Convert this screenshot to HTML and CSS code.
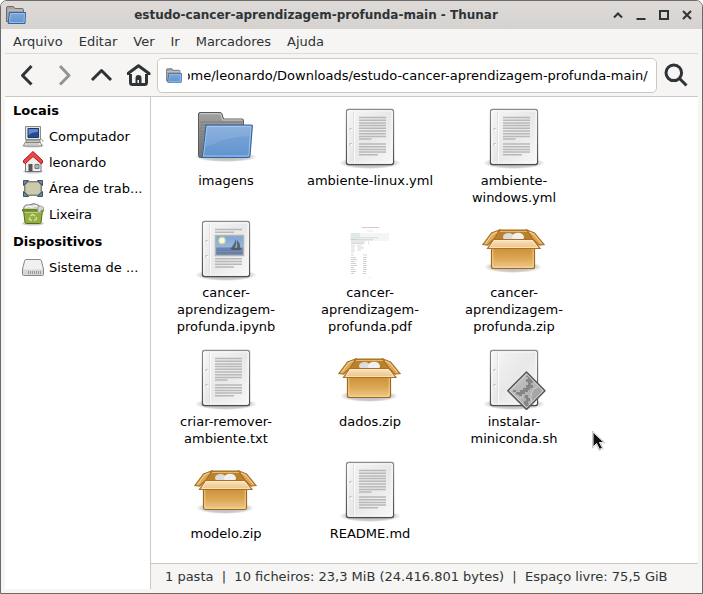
FILE: index.html
```html
<!DOCTYPE html>
<html lang="pt">
<head>
<meta charset="utf-8">
<title>estudo-cancer-aprendizagem-profunda-main - Thunar</title>
<link rel="stylesheet" href="styles.css">
<script src="main.js" defer></script>
</head>
<body>
<svg class="defs" width="0" height="0" aria-hidden="true">
  <defs>
    <linearGradient id="paper" x1="0" y1="0" x2="1" y2="1"><stop offset="0" stop-color="#f6f6f6"/><stop offset=".5" stop-color="#e8e8e8"/><stop offset="1" stop-color="#f8f8f8"/></linearGradient>
    <linearGradient id="edge" x1="0" y1="0" x2="0" y2="1"><stop offset="0" stop-color="#8c8c8c"/><stop offset="1" stop-color="#4c4c4c"/></linearGradient>
    <linearGradient id="blue" x1="0" y1="0" x2="0" y2="1"><stop offset="0" stop-color="#7fa8d8"/><stop offset="1" stop-color="#5f94d0"/></linearGradient>
    <linearGradient id="gray" x1="0" y1="0" x2="0" y2="1"><stop offset="0" stop-color="#a2a2a2"/><stop offset="1" stop-color="#727272"/></linearGradient>
    <linearGradient id="card" x1="0" y1="0" x2="0" y2="1"><stop offset="0" stop-color="#cd9138"/><stop offset=".5" stop-color="#dca653"/><stop offset="1" stop-color="#efc98c"/></linearGradient>
    <linearGradient id="flap" x1="0" y1="0" x2="0" y2="1"><stop offset="0" stop-color="#fbe4c0"/><stop offset="1" stop-color="#ecc07c"/></linearGradient>
    <linearGradient id="metal" x1="0" y1="0" x2="1" y2="1"><stop offset="0" stop-color="#c8c8c8"/><stop offset="1" stop-color="#a4a4a4"/></linearGradient>
    <linearGradient id="sky" x1="0" y1="0" x2="0" y2="1"><stop offset="0" stop-color="#7ba5d6"/><stop offset="1" stop-color="#aac6e0"/></linearGradient>
    <radialGradient id="shade"><stop offset="0" stop-color="#000" stop-opacity=".3"/><stop offset=".75" stop-color="#000" stop-opacity=".2"/><stop offset="1" stop-color="#000" stop-opacity="0"/></radialGradient>

    <symbol id="folder" viewBox="0 0 64 64">
      <ellipse cx="32" cy="52" rx="31" ry="5" fill="url(#shade)"/>
      <path d="M6.500 52.500Q4.500 52.500 4.500 50.500V9Q4.500 7.500 6 7.500H26Q27.500 7.500 28 9L29.500 14H48Q49.500 14 49.500 15.500V52.500Z" fill="url(#gray)" stroke="#5a5a5a"/>
      <path d="M6 8.700H26.500L28.500 15H48" fill="none" stroke="#cecece"/>
      <path d="M6 17H48M6 20H48M6 23H12M6 26H11M6 29H11M6 32H10M6 35H10M6 38H10M6 41H9M6 44H9" stroke="#777" stroke-width=".8"/>
      <path d="M12 20H57.500Q58.500 20 58.300 21L56 50.500Q55.800 52.500 54 52.500H7Q8.500 52 9 49Z" fill="url(#blue)" stroke="#3566a5" stroke-width="1.200"/>
      <path d="M13 21.500H56.800L54.800 51H9.500Z" fill="none" stroke="#bcd3ee" opacity=".7"/>
      <path d="M13.500 22H56L55.300 31Q36 32 24 37 16 41 11.500 41Z" fill="#fff" opacity=".1"/>
    </symbol>

    <symbol id="folder-small" viewBox="0 0 20 18">
      <path d="M.5 15.500V2Q.5 .5 2 .5H7.500L9 2.500H16Q17.500 2.500 17.500 4V15.500Z" fill="#a3a3a3" stroke="#6d6d6d"/>
      <path d="M1.500 4H17" stroke="#c6c6c6"/>
      <path d="M3.500 6.500H19.500L19 17.500H2.200Z" fill="url(#blue)" stroke="#2f62a4" stroke-linejoin="round"/>
      <path d="M4.500 7.500H18.400L18 16.500H3.500Z" fill="none" stroke="#a9c6e8" opacity=".8"/>
    </symbol>

    <symbol id="page" viewBox="0 0 64 64">
      <ellipse cx="32" cy="58" rx="31" ry="6" fill="url(#shade)"/>
      <rect x="8.500" y="4.500" width="47" height="55" rx="2" fill="url(#paper)" stroke="url(#edge)" stroke-width="1.300"/>
      <rect x="9.800" y="5.800" width="44.400" height="52.400" rx="1" fill="none" stroke="#fff"/>
      <path d="M15.500 6V58" stroke="#dadada" stroke-width=".8"/><path d="M16.500 6V58" stroke="#fff" stroke-width=".8"/>
      <circle cx="12.800" cy="24.300" r="1.300" fill="#b5b5b5"/><circle cx="13.400" cy="24.900" r="1.100" fill="#fff"/>
      <circle cx="12.800" cy="39.300" r="1.300" fill="#b5b5b5"/><circle cx="13.400" cy="39.900" r="1.100" fill="#fff"/>
    </symbol>

    <symbol id="text" viewBox="0 0 64 64">
      <use href="#page"/>
      <path d="M21 12.500H48M21 15.200H48M21 17.900H48M21 20.600H48M21 23.300H48M21 26H48M21 28.700H48M21 31.400H48M21 34.100H33.500M21 39H48M21 41.700H48M21 44.400H48M21 47.100H48M21 49.800H40" stroke="#b8b8b8" stroke-width="1.500"/>
    </symbol>

    <symbol id="rich" viewBox="0 0 64 64">
      <use href="#page"/>
      <path d="M21 12.500H48M21 15.300H40M21 41.800H48M21 44.500H48M21 47.200H48M21 49.900H40" stroke="#b8b8b8" stroke-width="1.500"/>
      <rect x="21.500" y="18.500" width="28" height="20" fill="url(#sky)" stroke="#b4b4b4" stroke-width="1.500"/>
      <path d="M22.200 30.500H48.800V37.800H22.200Z" fill="#6780a6"/>
      <path d="M22.500 32H49M22.500 34.500H49" stroke="#7d94b5" stroke-width=".7"/>
      <circle cx="28" cy="23.500" r="3.800" fill="#f0f0a0" opacity=".7"/><circle cx="28" cy="23.500" r="2.500" fill="#fffad0"/>
      <path d="M42 22Q43 27 41 31H37Q40 28 42 22ZM43 23Q47 27 46 31H43Z" fill="#5b6675"/><path d="M36 31H48L46 33H38Z" fill="#505b6c"/>
    </symbol>

    <symbol id="preview" viewBox="0 0 64 64">
      <path d="M24 10.500H41" stroke="#d0b8be" stroke-width=".8"/><path d="M29 14H35" stroke="#ddd" stroke-width=".7"/>
      <path d="M12 16H51V24H12Z" fill="#f5f5f5"/>
      <path d="M13 17H22M13 19H22M13 20.800H40M13 22.400H18" stroke="#b9dac2" stroke-width=".7"/>
      <path d="M13 22.800H35M13 25H27M13 26.700H26M30 25H31M30 26.700H31" stroke="#bbb" stroke-width=".7"/>
      <path d="M13 29H17M13 31H16M13 33H17M13 35H16M19 29H24M20 31H26M19 33H23M13 38H16M25 38H29" stroke="#c4c4c4" stroke-width=".7"/>
      <path d="M13 40.500H18M13 42.500H19M13 44.500H17M13 46.500H18M13 48.500H19M13 50.500H16M13 52.500H17M13 54.500H18M13 56.500H16" stroke="#c4c4c4" stroke-width=".8"/>
      <path d="M25 40.500H29M25 42.500H28M25 44.500H29M25 46.500H28M25 48.500H29M25 50.500H28M25 52.500H29M25 54.500H28M25 56.500H28" stroke="#c4c4c4" stroke-width=".8"/>
      <path d="M31 60.500H32" stroke="#ccc" stroke-width=".7"/>
    </symbol>

    <symbol id="box" viewBox="0 0 64 64">
      <ellipse cx="31" cy="50" rx="29" ry="6" fill="url(#shade)"/>
      <path d="M17 13H45.500L52 23V31H11V23Z" fill="#b9812d" stroke="#a06a1c"/>
      <path d="M18 14.500H45" stroke="#e7b767"/>
      <ellipse cx="26.500" cy="20" rx="5.500" ry="4" fill="#dcdcdc"/><ellipse cx="36" cy="20" rx="6" ry="4.300" fill="#f0f0f0"/>
      <path d="M17.500 13L9.500 16 1 27.500 5.500 28 12 22Z" fill="#e1a854" stroke="#a8712a" stroke-width="1.200"/>
      <path d="M45 13L52.500 16 62 27.500 57 28 51 22Z" fill="#e1a854" stroke="#a8712a" stroke-width="1.200"/>
      <path d="M15.500 15L10.500 17 3.500 26.500M47 15L51.800 17 59.500 26.500" fill="none" stroke="#f8d59d"/>
      <path d="M9.500 31V49.500Q9.500 51.500 11.500 51.500H50.500Q52.500 51.500 52.500 49.500V31Z" fill="url(#card)" stroke="#a06a1c" stroke-width="1.200"/>
      <path d="M10.800 32V50.200H51.200V32" fill="none" stroke="#f7d89f" opacity=".8"/>
      <path d="M11.500 22.500H51L58 31.500H5.500Z" fill="url(#flap)" stroke="#a8712a" stroke-width="1.200"/>
      <path d="M12 23.600H50.500L55.500 30.400H8Z" fill="none" stroke="#fdebcf" stroke-width=".8"/>
    </symbol>

    <symbol id="script" viewBox="0 0 64 64">
      <use href="#page"/>
      <path d="M44.500 26L63 44.800 44.500 63.500 25.800 44.800Z" fill="url(#metal)" stroke="#555" stroke-width="1.400" stroke-linejoin="round"/>
      <path d="M44.500 28L61 44.800 44.500 61.500 27.800 44.800Z" fill="none" stroke="#ddd" stroke-width=".8"/>
      <path d="M45 29L51 35V37H49V39H51V42H48V44H46V46H43V48H40V50H37L34 48V46H31V44H34V46H38V44H41V42H44V39H46V36H44V33H46V31H44Z" fill="#858585"/>
      <path d="M31 46L34 49H37V51H40V49H43V52H41L38 54Z" fill="#bcbcbc"/>
      <path d="M43 49H46V52H48V55H46V58H47V59L44.500 61 42 58V55H44V52H42Z" fill="#858585"/>
      <path d="M56.500 40.500L61 44.800 50 56Q48 52 49.500 47T56.500 40.500Z" fill="#a6a6a6" stroke="#d0d0d0"/>
    </symbol>
  </defs>
</svg>

<div class="window">
  <header class="titlebar">
    <svg class="app-icon"><use href="#folder-small"/></svg>
    <h1 class="title">estudo-cancer-aprendizagem-profunda-main - Thunar</h1>
    <div class="controls">
      <button aria-label="Enrolar"><svg viewBox="0 0 12 12"><path d="M2 8.500L6 4.500 10 8.500"/></svg></button>
      <button aria-label="Minimizar"><svg viewBox="0 0 12 12"><path d="M1.500 10H10.500"/></svg></button>
      <button aria-label="Maximizar"><svg viewBox="0 0 12 12"><path d="M2 2H10V10H2Z"/></svg></button>
      <button aria-label="Fechar"><svg viewBox="0 0 12 12"><path d="M2 2L10 10M10 2L2 10"/></svg></button>
    </div>
  </header>

  <nav class="menubar">
    <button>Arquivo</button><button>Editar</button><button>Ver</button><button>Ir</button><button>Marcadores</button><button>Ajuda</button>
  </nav>

  <div class="toolbar">
    <button class="tool" aria-label="Voltar"><svg viewBox="0 0 24 24"><path d="M15.500 3L6.500 12.500 15.500 21.500"/></svg></button>
    <button class="tool" aria-label="Avançar" disabled><svg viewBox="0 0 24 24"><path d="M7 3L16 12.500 7 21.500"/></svg></button>
    <button class="tool" aria-label="Subir"><svg viewBox="0 0 24 24"><path d="M2 17L11.500 7.500 21 17"/></svg></button>
    <button class="tool" aria-label="Início"><svg viewBox="0 0 24 24"><path d="M1 12V10.500L11.500 2.800 22 10.500V12M3.500 11V19.500Q3.500 21.500 5.500 21.500H17.500Q19.500 21.500 19.500 19.500V11"/><path class="solid" d="M8.500 21V15Q8.500 12 11.500 12T14.500 15V21H12V17H10.500V21Z"/></svg></button>
    <div class="location">
      <svg><use href="#folder-small"/></svg>
      <input id="path" type="text" aria-label="Localização" spellcheck="false" value="/home/leonardo/Downloads/estudo-cancer-aprendizagem-profunda-main/">
    </div>
    <button class="tool search" aria-label="Procurar"><svg viewBox="0 0 24 24"><circle cx="9.800" cy="9.800" r="7.800"/><path d="M15.500 15.500L22.500 22.500"/></svg></button>
  </div>

  <div class="content">
    <aside class="sidebar">
      <h2>Locais</h2>
      <ul>
        <li><a href="#computador">
          <svg viewBox="0 0 24 24"><ellipse cx="12" cy="21.500" rx="11" ry="2" fill="#ccc"/><path d="M4.500 2.500H19.500V15.500H4.500Z" fill="#e4e4de" stroke="#8b8b84"/><path d="M7 4.500H17.500V13.500H7Z" fill="#234a93" stroke="#16376f"/><path d="M7.500 5H17V8Q11 8 7.500 11Z" fill="#6589c6"/><path d="M5 16H19V18.500H5Z" fill="#c2c2ba" stroke="#8b8b84"/><path d="M4 18.500H19.500L21 22H2.500Z" fill="#eee" stroke="#888"/><path d="M5 20H18" stroke="#aaa"/><path d="M20 15Q22.500 15.500 22 18" fill="none" stroke="#aaa"/></svg>
          Computador</a></li>
        <li><a href="#leonardo">
          <svg viewBox="0 0 24 24"><ellipse cx="12" cy="21.500" rx="10" ry="2" fill="#ccc"/><path d="M4.500 11L12 4 20 11V21.500H4.500Z" fill="#eee" stroke="#777"/><path d="M7.500 14H11.500V21.500H7.500Z" fill="#555"/><path d="M14 14.500H18V18.500H14Z" fill="#aab4c2" stroke="#777"/><path d="M12 1.500L21.500 10.500V13L20 13.500 12 6.500 4.500 13.500 2.500 12.500V10.500Z" fill="#ef4747" stroke="#b51616"/></svg>
          leonardo</a></li>
        <li><a href="#area">
          <svg viewBox="0 0 24 24"><path d="M3.500 5.500H20.500V19.500H3.500Z" fill="#c2c3a2" stroke="#777968"/><path d="M7 6H17L20 9V16L17 19H7L4 16V9Z" fill="#c9caae" stroke="#8b8d75"/><path d="M2.500 4.500H7.500L2.500 9.500ZM16.500 4.500H21.500V9.500ZM2.500 15.500L7.500 20.500H2.500ZM21.500 15.500V20.500H16.500Z" fill="#7087a8" stroke="#3e506b"/></svg>
          Área de trab...</a></li>
        <li><a href="#lixeira">
          <svg viewBox="0 0 24 24"><ellipse cx="12" cy="21.500" rx="11" ry="2" fill="#ccc"/><path d="M2.500 7.500Q2.500 3 6 3T11 2 16 2.500 21.500 7.500Z" fill="#c9ccc9" stroke="#7d807d"/><path d="M4.500 5.500L8 4 11 5.500 14 3.500 17 5" fill="none" stroke="#f4f4f4" stroke-width="1.500"/><path d="M2.500 8.500H21.500L20 20.500Q20 21.500 18.500 21.500H5.500Q4 21.500 4 20.500Z" fill="#93ad3f" stroke="#566d16"/><path d="M1 7H23V9.500H1Z" fill="#6d8a22"/><path d="M3.500 10.500H20.500" stroke="#bccf7d"/><path d="M17 4.500Q21 3 22.500 5.500T19.500 9L18.500 11.500 16.500 9Z" fill="#d5d5d5" stroke="#8b8b8b" stroke-width=".7"/><path d="M9.500 14L11.500 12.500 14 14M15.500 15L15 17.500 13 18.500M11 18.500L8.500 17.500 9 15.500" fill="none" stroke="#dce7b8" stroke-width="1.300"/></svg>
          Lixeira</a></li>
      </ul>
      <h2>Dispositivos</h2>
      <ul>
        <li><a href="#sistema">
          <svg viewBox="0 0 24 24"><path d="M5 4.500H19Q20 4.500 20.300 5.500L22.500 14V19.500Q22.500 20.500 21.500 20.500H2.500Q1.500 20.500 1.500 19.500V14L3.700 5.500Q4 4.500 5 4.500Z" fill="#f0f0f0" stroke="#888"/><path d="M2 14.500H22V20H2Z" fill="#d7d7d7"/><path d="M7.500 16V19M9.500 16V19M11.500 16V19M13.500 16V19M15.500 16V19M17.500 16V19M19.500 16V19" stroke="#999"/></svg>
          Sistema de ...</a></li>
      </ul>
    </aside>

    <main class="pane">
      <ul class="files">
        <li><svg><use href="#folder"/></svg><span>imagens</span></li>
        <li><svg><use href="#text"/></svg><span>ambiente-linux.yml</span></li>
        <li><svg><use href="#text"/></svg><span>ambiente-windows.yml</span></li>
        <li><svg><use href="#rich"/></svg><span>cancer-aprendizagem-profunda.ipynb</span></li>
        <li><svg><use href="#preview"/></svg><span>cancer-aprendizagem-profunda.pdf</span></li>
        <li><svg><use href="#box"/></svg><span>cancer-aprendizagem-profunda.zip</span></li>
        <li><svg><use href="#text"/></svg><span>criar-remover-ambiente.txt</span></li>
        <li><svg><use href="#box"/></svg><span>dados.zip</span></li>
        <li><svg><use href="#script"/></svg><span>instalar-miniconda.sh</span></li>
        <li><svg><use href="#box"/></svg><span>modelo.zip</span></li>
        <li><svg><use href="#text"/></svg><span>README.md</span></li>
      </ul>
      <footer class="status">1 pasta&nbsp; |&nbsp; 10 ficheiros: 23,3 MiB (24.416.801 bytes)&nbsp; |&nbsp; Espaço livre: 75,5 GiB</footer>
    </main>
  </div>
</div>
<svg class="pointer" viewBox="0 0 14 20" aria-hidden="true"><path d="M1 1V16L4.500 12.500 7.500 18.500 10.500 17 7.500 11.500H12Z" fill="#111" stroke="#fff"/><path d="M.5 0V17L4.500 13.500 7 19.500 11 17.500 8.500 12H13Z" fill="none" stroke="#999" stroke-width=".5"/></svg>
</body>
</html>
```
FILE: styles.css
```css
* {
  box-sizing: border-box;
}

body {
  margin: 0;
  background: #fff;
  color: #000;
  font: 13px/17px "DejaVu Sans", sans-serif;
}

button,
input {
  margin: 0;
  padding: 0;
  border: 0;
  background: none;
  color: inherit;
  font: inherit;
}

h1,
h2,
ul {
  margin: 0;
  padding: 0;
  list-style: none;
  font-size: inherit;
}

svg {
  display: block;
  flex: none;
}

.defs {
  position: absolute;
}

.window {
  display: flex;
  flex-direction: column;
  min-height: 100vh;
  overflow: hidden;
  border: 1px solid #6c6967;
  border-radius: 7px 7px 0 0;
  background: #f6f5f3;
  color: #2e3436;
}

.titlebar {
  display: flex;
  align-items: center;
  height: 28px;
  padding: 0 4px 0 5px;
  background: linear-gradient(#dedad7, #d6d2cf);
}

.app-icon {
  width: 20px;
  height: 18px;
}

.title {
  flex: 1;
  text-align: center;
  font-size: 12px;
}

.controls {
  display: flex;
}

.controls button {
  display: grid;
  place-items: center;
  width: 23px;
  height: 28px;
}

.controls svg {
  width: 12px;
  height: 12px;
  fill: none;
  stroke: #2e3436;
  stroke-width: 2;
}

.menubar {
  display: flex;
  height: 25px;
  margin: 0 4px;
  padding: 0 0 0 8px;
  gap: 16px;
  border-bottom: 1px solid #dddad7;
}

.toolbar {
  display: flex;
  align-items: center;
  height: 43px;
  margin: 0 4px;
  padding: 0 4px;
  border-bottom: 1px solid #cdc7c2;
}

.tool {
  display: grid;
  place-items: center;
  width: 37px;
  height: 35px;
}

.tool svg {
  width: 24px;
  height: 24px;
  fill: none;
  stroke: #2e3436;
  stroke-width: 3;
  stroke-linejoin: round;
}

.tool .solid {
  fill: #2e3436;
  stroke: none;
}

.tool:disabled svg {
  stroke: #929595;
}

.location {
  display: flex;
  flex: 1;
  align-items: center;
  height: 35px;
  min-width: 0;
  padding: 0 8px;
  gap: 6px;
  border: 1px solid #cdc7c2;
  border-radius: 5px;
  background: #fff;
}

.location svg {
  width: 16px;
  height: 15px;
}

.location input {
  flex: 1;
  min-width: 0;
  color: #000;
  outline: 0;
}

.content {
  display: flex;
  flex: 1;
  margin: 0 4px 4px;
  background: #fff;
  color: #000;
}

.sidebar {
  width: 146px;
  border-right: 1px solid #cdc7c2;
}

.sidebar h2 {
  padding: 5px 8px 4px;
}

.sidebar ul + h2 {
  padding-top: 6px;
}

.sidebar a {
  display: flex;
  align-items: center;
  height: 26px;
  padding-left: 16px;
  gap: 4px;
  color: inherit;
  text-decoration: none;
  white-space: nowrap;
}

.sidebar svg {
  width: 24px;
  height: 24px;
}

.pane {
  display: flex;
  flex: 1;
  flex-direction: column;
  min-width: 0;
}

.files {
  display: grid;
  flex: 1;
  grid-template-columns: repeat(auto-fill, 132px);
  align-content: start;
  gap: 11px 12px;
  padding: 8px 9px;
}

.files li {
  display: flex;
  flex-direction: column;
  align-items: center;
  gap: 3px;
  text-align: center;
}

.files svg {
  width: 64px;
  height: 64px;
}

.files span {
  max-width: 100%;
}

.status {
  padding: 4px 14px;
  border-top: 1px solid #cdc7c2;
  background: #f6f5f3;
  color: #2e3436;
}

.pointer {
  position: absolute;
  top: 431px;
  left: 592px;
  width: 14px;
  height: 20px;
}
```
FILE: main.js
```javascript
const path = document.getElementById("path");
path.scrollLeft = path.scrollWidth;
```
